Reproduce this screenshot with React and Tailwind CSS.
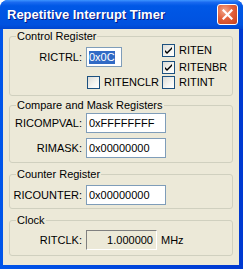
import React from "react";

function CheckBox({ label, checked }) {
  return (
    <label className="flex items-center gap-[4px] h-[13px]">
      <span className="w-[13px] h-[13px] border border-[#1C5180] bg-[linear-gradient(135deg,#DCDCD7_0%,#F5F5F1_60%,#FFFFFF_100%)] flex items-center justify-center">
        {checked && (
          <svg width="9" height="9" viewBox="0 0 9 9">
            <path d="M1 4 L3 6 L8 1 L8 3 L3 8 L1 6 Z" fill="#000" />
          </svg>
        )}
      </span>
      <span className="leading-[13px]">{label}</span>
    </label>
  );
}

function TextBox({ value }) {
  return (
    <div className="w-[80px] h-[20px] border border-[#7F9DB9] bg-white flex items-center pl-[2px] leading-[13px]">
      {value}
    </div>
  );
}

function Group({ title, className = "", children }) {
  return (
    <div className={`relative border border-[#D0D0BF] rounded-[3px] ${className}`}>
      <span className="absolute left-[6px] -top-[7px] px-[1px] leading-[13px] bg-[#ECE9D8]">{title}</span>
      {children}
    </div>
  );
}

export default function App() {
  return (
    <div className="w-[243px] h-[269px] bg-white">
      <div className="w-[243px] h-[269px] rounded-t-[8px] bg-[linear-gradient(to_right,#0055EA,#0047DD_50%,#0039D1)] flex flex-col text-[11px] leading-[13px] text-black font-['Liberation_Sans',Arial,sans-serif]">
        <div className="h-[29px] shrink-0 rounded-t-[8px] bg-[linear-gradient(to_bottom,#3D95FF_0%,#1A6AF0_8%,#0058E6_20%,#0055E3_50%,#0052DF_85%,#0046D0_100%)] flex items-center pl-[7px] pr-[5px]">
          <span className="flex-1 text-white font-bold text-[13px] leading-none [text-shadow:1px_1px_0_#0A1883]">
            Repetitive Interrupt Timer
          </span>
          <div className="w-[21px] h-[21px] rounded-[3px] border border-white bg-[radial-gradient(circle_at_35%_30%,#F2A88C_0%,#E2613C_45%,#C8401A_100%)] flex items-center justify-center">
            <svg width="11" height="11" viewBox="0 0 11 11">
              <path d="M1.5 1.5 L9.5 9.5 M9.5 1.5 L1.5 9.5" stroke="#fff" strokeWidth="2.2" strokeLinecap="square" />
            </svg>
          </div>
        </div>

        <div className="flex-1 ml-[3px] mr-[4px] mb-[4px] bg-[#ECE9D8] px-[6px] pt-[7px] flex flex-col">
          <Group title="Control Register">
            <div className="grid grid-cols-[76px_76px_1fr] pt-[7px] pb-[6px]">
              <div className="row-start-1 col-start-1 mt-[3px] h-[20px] flex items-center justify-end pr-[4px]">
                RICTRL:
              </div>
              <div className="row-start-1 col-start-2 mt-[3px]">
                <div className="w-[36px] h-[20px] border border-[#7F9DB9] bg-white flex items-center pl-[2px]">
                  <span className="bg-[#316AC5] text-white leading-[13px]">0x0C</span>
                </div>
              </div>
              <div className="row-start-1 col-start-3 flex flex-col gap-[4px]">
                <CheckBox label="RITEN" checked />
                <CheckBox label="RITENBR" checked />
              </div>
              <div className="row-start-2 col-start-2 mt-[2px] pl-[1px]">
                <CheckBox label="RITENCLR" />
              </div>
              <div className="row-start-2 col-start-3 mt-[2px]">
                <CheckBox label="RITINT" />
              </div>
            </div>
          </Group>

          <Group title="Compare and Mask Registers" className="mt-[9px]">
            <div className="grid grid-cols-[76px_1fr] gap-y-[5px] pt-[7px] pb-[4px]">
              <div className="h-[20px] flex items-center justify-end pr-[4px]">RICOMPVAL:</div>
              <TextBox value="0xFFFFFFFF" />
              <div className="h-[20px] flex items-center justify-end pr-[4px]">RIMASK:</div>
              <TextBox value="0x00000000" />
            </div>
          </Group>

          <Group title="Counter Register" className="mt-[11px]">
            <div className="grid grid-cols-[76px_1fr] pt-[10px] pb-[3px]">
              <div className="h-[20px] flex items-center justify-end pr-[4px]">RICOUNTER:</div>
              <TextBox value="0x00000000" />
            </div>
          </Group>

          <Group title="Clock" className="mt-[11px]">
            <div className="grid grid-cols-[76px_71px_1fr] pt-[9px] pb-[5px]">
              <div className="h-[20px] flex items-center justify-end pr-[4px]">RITCLK:</div>
              <div className="h-[20px] border border-t-[#808080] border-l-[#808080] border-b-white border-r-white bg-[#ECE9D8] flex items-center justify-end pr-[3px]">
                1.000000
              </div>
              <div className="h-[20px] flex items-center pl-[4px]">MHz</div>
            </div>
          </Group>
        </div>
      </div>
    </div>
  );
}
